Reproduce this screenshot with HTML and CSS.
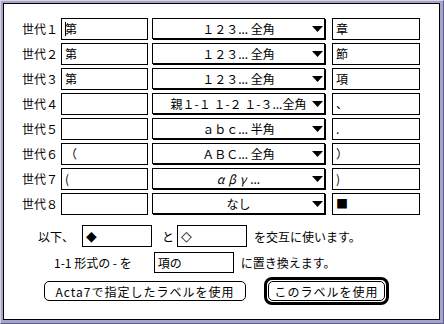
FILE: index.html
```html
<!DOCTYPE html>
<html lang="ja">
<head>
  <meta charset="UTF-8">
  <title>ラベル設定</title>
  <link rel="stylesheet" href="styles.css">
</head>
<body>

  <div class="window">
    <div class="dialog">

      <!-- 世代ごとのラベル -->
      <div class="levels">
        <div class="lvl">世代１</div>
        <div class="field"><i class="caret"></i>第</div>
        <div class="popup"><span>１２３... 全角</span><svg class="arrow" width="11" height="6"><polygon points="0,0 11,0 5.5,6"/></svg></div>
        <div class="field right">章</div>

        <div class="lvl">世代２</div>
        <div class="field">第</div>
        <div class="popup"><span>１２３... 全角</span><svg class="arrow" width="11" height="6"><polygon points="0,0 11,0 5.5,6"/></svg></div>
        <div class="field right">節</div>

        <div class="lvl">世代３</div>
        <div class="field">第</div>
        <div class="popup"><span>１２３... 全角</span><svg class="arrow" width="11" height="6"><polygon points="0,0 11,0 5.5,6"/></svg></div>
        <div class="field right">項</div>

        <div class="lvl">世代４</div>
        <div class="field"></div>
        <div class="popup"><span>親１-１ １-２ １-３...全角</span><svg class="arrow" width="11" height="6"><polygon points="0,0 11,0 5.5,6"/></svg></div>
        <div class="field right">、</div>

        <div class="lvl">世代５</div>
        <div class="field"></div>
        <div class="popup"><span>ａｂｃ... 半角</span><svg class="arrow" width="11" height="6"><polygon points="0,0 11,0 5.5,6"/></svg></div>
        <div class="field right">.</div>

        <div class="lvl">世代６</div>
        <div class="field">（</div>
        <div class="popup"><span>ＡＢＣ... 全角</span><svg class="arrow" width="11" height="6"><polygon points="0,0 11,0 5.5,6"/></svg></div>
        <div class="field right">）</div>

        <div class="lvl">世代７</div>
        <div class="field">(</div>
        <div class="popup"><span><em class="greek">αβγ</em>...</span><svg class="arrow" width="11" height="6"><polygon points="0,0 11,0 5.5,6"/></svg></div>
        <div class="field right">)</div>

        <div class="lvl">世代８</div>
        <div class="field"></div>
        <div class="popup"><span>なし</span><svg class="arrow" width="11" height="6"><polygon points="0,0 11,0 5.5,6"/></svg></div>
        <div class="field right">■</div>
      </div>

      <div class="line alt">
        <span class="t-below">以下、</span>
        <div class="box"><span class="sym">◆</span></div>
        <span class="t-and">と</span>
        <div class="box"><span class="sym">◇</span></div>
        <span class="t-after">を交互に使います。</span>
      </div>

      <div class="line repl">
        <span class="t-form">1-1 形式の - を</span>
        <div class="box wide">項の</div>
        <span class="t-after">に置き換えます。</span>
      </div>

      <div class="buttons">
        <button class="btn">Acta7で指定したラベルを使用</button>
        <div class="default-ring">
          <button class="btn">このラベルを使用</button>
        </div>
      </div>

    </div>
  </div>

</body>
</html>
```

FILE: styles.css
```css
body {
  margin: 0;
  font-family: "Noto Sans CJK JP", "DejaVu Sans", sans-serif;
  font-size: 12px;
  color: #000;
  background: #fff;
}

/* Window frame */
.window {
  width: 444px;
  height: 324px;
  box-sizing: border-box;
  background: #a4a4c8;
  border: 1px solid;
  border-color: #d4d4e4 #5c5c8c #5c5c8c #d4d4e4;
  padding: 2px 3px 3px 2px;
}

.dialog {
  height: 100%;
  box-sizing: border-box;
  border: 1px solid #000;
  background: #fff;
  padding-top: 14px;
}

/* Level rows */
.levels {
  display: grid;
  grid-template-columns: 57px 91px 180px 88px;
  grid-auto-rows: 22px;
  row-gap: 3px;
}

.lvl {
  padding-left: 18px;
  line-height: 22px;
}

.field {
  width: 87px;
  height: 22px;
  box-sizing: border-box;
  border: 1px solid #000;
  padding-left: 3px;
  line-height: 20px;
  white-space: pre;
  display: flex;
  align-items: center;
}

.field.right {
  width: 88px;
}

.caret {
  width: 1px;
  height: 14px;
  background: #000;
  margin-right: -1px;
}

.popup {
  width: 173px;
  height: 21px;
  box-sizing: border-box;
  border: 1px solid #000;
  box-shadow: 1px 1px 0 #000;
  display: flex;
  align-items: center;
}

.popup span {
  flex: 1;
  text-align: center;
  padding-left: 12px;
  white-space: nowrap;
}

.greek {
  font-style: italic;
  letter-spacing: 4px;
}

.arrow {
  margin-right: 1px;
}

/* Lower lines */
.line {
  display: flex;
  align-items: center;
  height: 22px;
}

.alt {
  margin-top: 10px;
}

.repl {
  margin-top: 5px;
  height: 21px;
}

.box {
  width: 70px;
  height: 22px;
  box-sizing: border-box;
  border: 1px solid #000;
  padding-left: 3px;
  line-height: 20px;
}

.box.wide {
  width: 80px;
  height: 21px;
}

.sym {
  font-family: "DejaVu Sans", sans-serif;
  font-size: 14px;
  color: #000;
}

.t-below {
  margin-left: 34px;
  margin-right: 8px;
}

.t-and {
  margin: 0 3px 0 10px;
}

.t-after {
  margin-left: 7px;
}

.t-form {
  margin-left: 50px;
  margin-right: 22px;
}

/* Buttons */
.buttons {
  display: flex;
  align-items: center;
  margin-top: 4px;
}

.btn {
  font: inherit;
  color: #000;
  background: #fff;
  border: 1px solid #000;
  border-radius: 5px;
  height: 20px;
  padding: 0;
  letter-spacing: 1px;
}

.buttons > .btn {
  width: 202px;
  margin-left: 40px;
}

.default-ring {
  margin-left: 18px;
  border: 3px solid #000;
  border-radius: 8px;
  padding: 1px;
  display: flex;
}

.default-ring .btn {
  width: 117px;
}
```
